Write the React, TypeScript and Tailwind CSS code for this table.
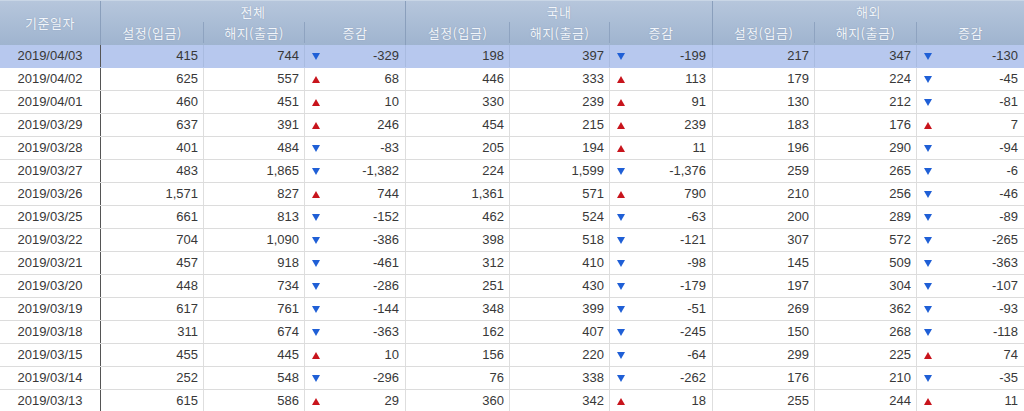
import React from "react";

const rows: string[][] = [
  ["2019/04/03", "415", "744", "d", "-329", "198", "397", "d", "-199", "217", "347", "d", "-130"],
  ["2019/04/02", "625", "557", "u", "68", "446", "333", "u", "113", "179", "224", "d", "-45"],
  ["2019/04/01", "460", "451", "u", "10", "330", "239", "u", "91", "130", "212", "d", "-81"],
  ["2019/03/29", "637", "391", "u", "246", "454", "215", "u", "239", "183", "176", "u", "7"],
  ["2019/03/28", "401", "484", "d", "-83", "205", "194", "u", "11", "196", "290", "d", "-94"],
  ["2019/03/27", "483", "1,865", "d", "-1,382", "224", "1,599", "d", "-1,376", "259", "265", "d", "-6"],
  ["2019/03/26", "1,571", "827", "u", "744", "1,361", "571", "u", "790", "210", "256", "d", "-46"],
  ["2019/03/25", "661", "813", "d", "-152", "462", "524", "d", "-63", "200", "289", "d", "-89"],
  ["2019/03/22", "704", "1,090", "d", "-386", "398", "518", "d", "-121", "307", "572", "d", "-265"],
  ["2019/03/21", "457", "918", "d", "-461", "312", "410", "d", "-98", "145", "509", "d", "-363"],
  ["2019/03/20", "448", "734", "d", "-286", "251", "430", "d", "-179", "197", "304", "d", "-107"],
  ["2019/03/19", "617", "761", "d", "-144", "348", "399", "d", "-51", "269", "362", "d", "-93"],
  ["2019/03/18", "311", "674", "d", "-363", "162", "407", "d", "-245", "150", "268", "d", "-118"],
  ["2019/03/15", "455", "445", "u", "10", "156", "220", "d", "-64", "299", "225", "u", "74"],
  ["2019/03/14", "252", "548", "d", "-296", "76", "338", "d", "-262", "176", "210", "d", "-35"],
  ["2019/03/13", "615", "586", "u", "29", "360", "342", "u", "18", "255", "244", "u", "11"],
];

const cols = "grid grid-cols-[101px_103px_101px_101px_104px_100px_103px_102px_102px_107px]";

function Arrow({ dir }: { dir: string }) {
  if (dir === "u") {
    return (
      <svg width="8" height="7" viewBox="0 0 8 7" className="shrink-0">
        <polygon points="4,0 8,7 0,7" fill="#c8141c" />
      </svg>
    );
  }
  return (
    <svg width="8" height="7" viewBox="0 0 8 7" className="shrink-0">
      <polygon points="0,0 8,0 4,7" fill="#1f5fd6" />
    </svg>
  );
}

const groups = ["전체", "국내", "해외"];
const subs = ["설정(입금)", "해지(출금)", "증감"];

export default function App() {
  return (
    <div className="w-[1024px] h-[411px] overflow-hidden bg-white font-['Liberation_Sans',sans-serif] text-[13px] text-[#383838]">
      {/* Header */}
      <div className="h-[45px] bg-gradient-to-b from-[#b6c6dc] to-[#9fb4cf] border-t border-[#c9d6e6] flex text-[#f1f5fa] font-['Noto_Sans_CJK_KR',sans-serif] text-[13px] tracking-[0.5px] [text-shadow:0_0_1px_rgba(90,110,140,0.5)]">
        <div className="w-[101px] shrink-0 flex items-center justify-center border-r border-[#8a9fbc]">
          기준일자
        </div>
        {groups.map((g, gi) => (
          <div
            key={g}
            className={`flex flex-col ${gi === 0 ? "w-[305px]" : gi === 1 ? "w-[307px]" : "w-[311px]"} ${gi < 2 ? "border-r border-[#8a9fbc]" : ""}`}
          >
            <div className="h-[21px] flex items-center justify-center leading-none">{g}</div>
            <div className="flex flex-1 pb-[2px]">
              {subs.map((s, si) => {
                const w =
                  gi === 0
                    ? ["w-[103px]", "w-[101px]", "w-[100px]"][si]
                    : gi === 1
                    ? ["w-[104px]", "w-[100px]", "w-[102px]"][si]
                    : ["w-[102px]", "w-[102px]", "w-[107px]"][si];
                return (
                  <div
                    key={s}
                    className={`${w} shrink-0 flex items-center justify-center leading-none ${si < 2 ? "border-r border-[#8ea3c0]" : ""}`}
                  >
                    {s}
                  </div>
                );
              })}
            </div>
          </div>
        ))}
      </div>
      {/* Body */}
      {rows.map((r, ri) => {
        const sel = ri === 0;
        const line = sel ? "border-[#a9bbe0]" : "border-[#dedede]";
        return (
          <div
            key={r[0]}
            className={`${cols} h-[23px] border-b ${sel ? "bg-[#b7c8ee] border-[#b7c8ee]" : "border-[#dcdcdc]"}`}
          >
            <div className="flex items-center justify-center border-r border-[#555]">{r[0]}</div>
            {[0, 1, 2].map((g) => {
              const b = 1 + g * 4;
              return (
                <React.Fragment key={g}>
                  <div className={`flex items-center justify-end pr-[5px] border-r ${line}`}>{r[b]}</div>
                  <div className={`flex items-center justify-end pr-[5px] border-r ${line}`}>{r[b + 1]}</div>
                  <div className={`flex items-center justify-between pl-[7px] pr-[6px] ${g < 2 ? "border-r " + line : ""}`}>
                    <Arrow dir={r[b + 2]} />
                    <span>{r[b + 3]}</span>
                  </div>
                </React.Fragment>
              );
            })}
          </div>
        );
      })}
    </div>
  );
}
